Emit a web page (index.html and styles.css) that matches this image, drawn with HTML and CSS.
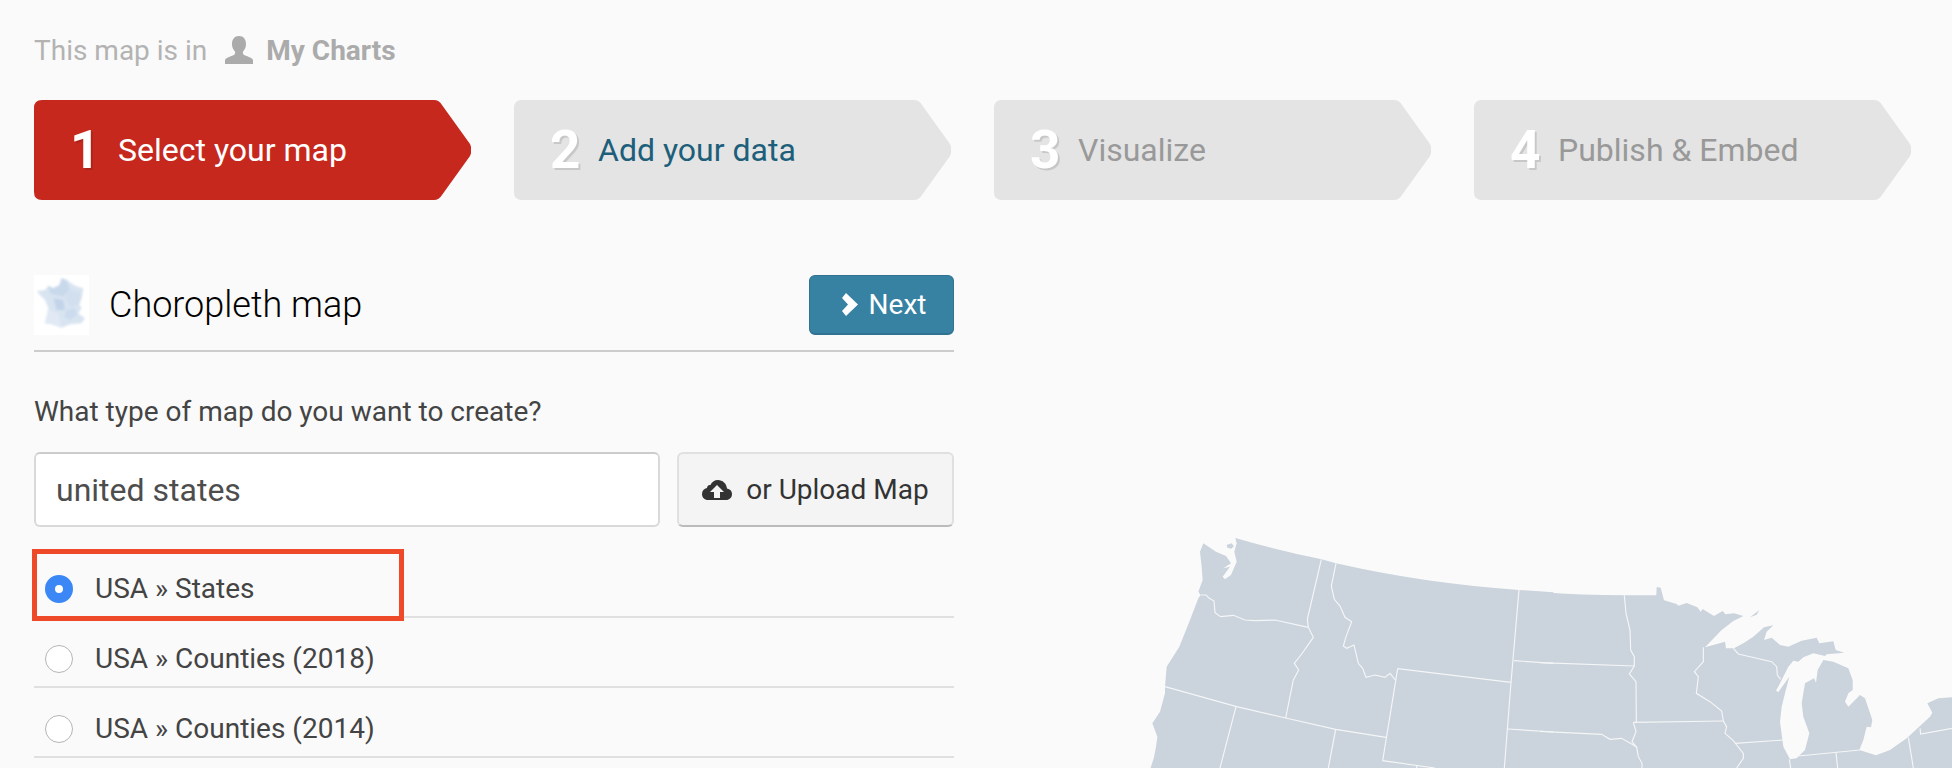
FILE: index.html
```html
<!DOCTYPE html>
<html lang="en">
<head>
  <meta charset="UTF-8" />
  <title>Select your map</title>
  <link rel="stylesheet" href="styles.css">
</head>
<body>
  <p class="breadcrumb">
    This map is in
    <svg class="user-icon" viewBox="0 0 28 28"><path d="M14 0c-4.600 0-7 3.500-7 8 0 3 1 5.500 2.800 7.200.5.500.5 2.600-.3 3.300C7 20.500 1 21 0 24v4h28v-4c-1-3-7-3.500-9.500-5.500-.8-.7-.8-2.800-.3-3.300C20 13.500 21 11 21 8c0-4.500-2.400-8-7-8z"/></svg>
    <strong>My Charts</strong>
  </p>

  <nav class="steps">
    <a class="step active"><b>1</b>Select your map</a>
    <a class="step next"><b>2</b>Add your data</a>
    <a class="step"><b>3</b>Visualize</a>
    <a class="step"><b>4</b>Publish &amp; Embed</a>
  </nav>

  <main class="columns">
    <section class="left">
      <div class="title-row">
        <div class="thumb">
          <svg viewBox="42 30 165 180">
            <path d="M50 78L75 75 85 62 100 70 118 60 125 40 140 45 165 62 190 70 185 100 178 118 185 130 175 145 195 160 185 175 150 178 125 188 95 178 75 175 85 130 75 105 60 90z" fill="#d9e4f1"/>
            <path d="M85 62L100 70 118 60 125 40 140 45 150 75 130 95 105 90 90 85z" fill="#c9d9ec"/>
            <path d="M150 75L185 85 178 118 150 125 135 100z" fill="#d2dfef"/>
            <path d="M100 100L130 105 135 135 110 135z" fill="#c3d4ea"/>
            <path d="M85 135L115 145 125 188 95 178 75 175z" fill="#e0e9f4"/>
            <path d="M140 135L165 130 172 150 150 165 132 155z" fill="#ccdbed"/>
          </svg>
        </div>
        <h2>Choropleth map</h2>
        <a class="btn-next">
          <svg viewBox="0 0 16 23"><path d="M4 0l12 11.500L4 23l-4-5 6-6.500L0 5z"/></svg>
          Next
        </a>
      </div>

      <p class="question">What type of map do you want to create?</p>

      <div class="search-row">
        <input class="search" type="text" value="united states">
        <a class="btn-upload">
          <svg viewBox="0 0 30 20"><path d="M25 8.500C24.500 3.500 20.500 0 16 0c-3.500 0-6.500 2-7.500 5C6.500 4.500 5 6 5 8 2 8.500 0 11 0 14c0 3.500 2.500 6 6 6h18c3.500 0 6-2.500 6-6 0-3-2-5-5-5.500zM18 12v6h-6v-6H8l7-7 7 7z"/></svg>
          or Upload Map
        </a>
      </div>

      <ul class="map-list">
        <li class="selected"><span class="radio"></span>USA » States</li>
        <li><span class="radio"></span>USA » Counties (2018)</li>
        <li><span class="radio"></span>USA » Counties (2014)</li>
      </ul>
    </section>

    <div class="map-preview">
      <svg class="usa" viewBox="0 0 2466 744">
        <g class="land">
          <path d="M316 54Q440 90 575 118L618 130Q880 190 1167 210L1270 217V750H60L72 712 78 680 82 650 67 610 90 575 105 520 105 500 110 440 148 380 180 300 205 235 212 225 205 215 218 180 215 140 210 95 220 70 258 95 288 108 303 130 280 145 300 140 278 170 285 178 303 165 320 125 313 95 320 70z"/>
          <path d="M290 75l14-5 8 8-8 8-12-3z"/>
        </g>
        <g class="land" transform="translate(1230)">
          <path d="M0 216Q125 226 253 226H349L350 201 362 203 372 241 410 252 415 257 440 249 472 262 482 275 488 267 522 288 548 273 556 283 582 280 610 288 580 303 545 330 495 382 555 365 558 385 582 385 610 370 640 350 672 322 700 316 680 335 672 360 695 353 720 375 745 380 785 362 830 353 838 370 880 364 887 390 913 398 860 403 855 408 820 400 790 412 775 425 760 422 745 440 725 480 708 512 715 516 748 470 735 520 725 560 720 605 730 680 750 718 770 715 795 690 808 640 790 590 785 550 795 490 822 475 828 488 833 450 850 420 880 425 925 445 938 480 938 510 925 520 915 545 925 560 960 525 975 535 997 600 993 622 980 620 970 660 958 690 1008 706 1050 690 1100 655 1170 590 1177 578 1162 550 1195 535 1236 532V750H0z"/>
          <path d="M630 292l28-22-8 14z"/>
        </g>
        <g class="borders">
          <path d="M574 118L532 298 535 322"/>
          <path d="M212 225H228L238 235 252 243 255 278 272 290 310 286 345 300 375 302 435 300 535 322"/>
          <path d="M535 322L550 352 515 402 493 430 506 450 490 480 467 594"/>
          <path d="M618 130L604 198 613 238 630 258 645 292 665 305 648 350 640 378 650 385 672 375 685 430 698 445 708 472 735 465 765 472 780 460 796 480"/>
          <path d="M803 446L1143 487"/>
          <path d="M803 446L758 722 915 744"/>
          <path d="M105 500L320 560 467 594 617 628 768 652"/>
          <path d="M318 560L270 744"/>
          <path d="M617 628L595 744"/>
          <path d="M860 737V744"/>
          <path d="M1167 210L1143 487 1123 744"/>
          <path d="M1152 422L1270 430"/>
          <path d="M1133 627L1270 636"/>
        </g>
        <g class="borders" transform="translate(1230)">
          <path d="M0 428L283 438"/>
          <path d="M0 634L185 643 210 658 245 655 280 675 290 682"/>
          <path d="M253 226L258 280 270 330 272 390 283 410 283 438 268 462 288 485 289 607"/>
          <path d="M280 607L550 603"/>
          <path d="M280 607L288 635 276 665 290 682 295 710 306 730V744"/>
          <path d="M490 382V425L463 455 475 470 469 520 510 545 545 573 550 603 560 620 555 640 580 662 610 700 610 715 590 744"/>
          <path d="M585 670L730 660"/>
          <path d="M580 385L595 402 695 425 710 440 712 465 722 478"/>
          <path d="M748 718L752 744"/>
          <path d="M775 708L960 690"/>
          <path d="M888 698L893 744"/>
          <path d="M1105 652L1120 744"/>
          <path d="M1140 625L1142 642 1236 625"/>
        </g>
      </svg>
    </div>
  </main>
</body>
</html>
```

FILE: styles.css
```css
html, body {
  height: 768px;
  overflow: hidden;
}
body {
  margin: 0;
  padding: 0 34px;
  background: #fafafa;
  color: #444;
  font-family: Roboto, sans-serif;
}
a {
  display: flex;
  align-items: center;
}
.breadcrumb {
  display: flex;
  align-items: center;
  height: 50px;
  margin: 0;
  padding-top: 25px;
  font-size: 28px;
  color: #b3b3b3;
}
.user-icon {
  width: 30px;
  height: 28px;
  margin: 0 12px 0 17px;
  fill: #ababab;
}
.breadcrumb strong {
  color: #ababab;
  font-weight: 700;
}
.steps {
  display: flex;
  gap: 43px;
  height: 100px;
  margin: 25px 0 75px;
}
.step {
  width: 437px;
  height: 100px;
  font-size: 32px;
  color: #999;
  background: #e4e4e4;
  clip-path: path('M8 0H400Q405 0 408 5L436 44Q439 50 436 56L408 95Q405 100 400 100H8Q0 100 0 92V8Q0 0 8 0Z');
}
.step b {
  width: 84px;
  padding-left: 36px;
  box-sizing: border-box;
  font-size: 53px;
  color: #fff;
  text-shadow: 2px 2px 0 rgba(0, 0, 0, 0.12);
}
.step.active {
  color: #fff;
  background: #c6281e;
}
.step.next {
  color: #1d5f7a;
}
.columns {
  display: flex;
}
.left {
  width: 920px;
}
.title-row {
  display: flex;
  align-items: center;
  height: 60px;
  padding-bottom: 15px;
  border-bottom: 2px solid #ccc;
}
.thumb {
  width: 55px;
  height: 60px;
  background: #fff;
}
.thumb svg {
  display: block;
  width: 55px;
  height: 60px;
  filter: blur(0.8px);
}
.title-row h2 {
  flex: 1;
  margin: 0 0 0 20px;
  font-size: 36px;
  font-weight: 300;
  color: #000;
}
.btn-next {
  justify-content: center;
  gap: 11px;
  width: 145px;
  height: 60px;
  box-sizing: border-box;
  padding-left: 5px;
  font-size: 28px;
  color: #fff;
  background: #3781a3;
  border: 1px solid #2f7291;
  border-bottom-width: 2px;
  border-radius: 6px;
}
.btn-next svg {
  width: 16px;
  height: 23px;
  fill: #fff;
}
.question {
  margin: 45px 0 25px;
  height: 30px;
  line-height: 30px;
  font-size: 28px;
  color: #444;
}
.search-row {
  display: flex;
  gap: 17px;
  height: 75px;
}
.search {
  width: 626px;
  height: 75px;
  box-sizing: border-box;
  padding: 0 20px;
  font: 32px Roboto, sans-serif;
  color: #4d4d4d;
  background: #fff;
  border: 2px solid #d9d9d9;
  border-top-color: #ccc;
  border-radius: 6px;
  outline: none;
}
.btn-upload {
  justify-content: center;
  gap: 14px;
  width: 277px;
  height: 75px;
  box-sizing: border-box;
  font-size: 28px;
  color: #333;
  background: #f4f4f4;
  border: 2px solid #e0e0e0;
  border-bottom-color: #bbb;
  border-radius: 6px;
}
.btn-upload svg {
  width: 30px;
  height: 20px;
  fill: #333;
}
.map-list {
  margin: 21px 0 0;
  padding: 0;
  list-style: none;
}
.map-list li {
  display: flex;
  align-items: center;
  height: 56px;
  padding: 12px 0 0 11px;
  font-size: 28px;
  color: #444;
  border-bottom: 2px solid #e0e0e0;
}
.map-list li.selected {
  position: relative;
}
.map-list li.selected::after {
  content: "";
  position: absolute;
  left: -2px;
  top: 1px;
  width: 372px;
  height: 72px;
  box-sizing: border-box;
  border: 5px solid #ee4a2a;
}
.radio {
  width: 28px;
  height: 28px;
  box-sizing: border-box;
  margin: 2px 22px 0 0;
  background: #fff;
  border: 1px solid #b5b5b5;
  border-radius: 50%;
}
.selected .radio {
  background: #fff;
  border: 10px solid #3b87f5;
}
.map-preview {
  margin: 245px 0 0 176px;
}
.usa {
  display: block;
  width: 822px;
  height: 248px;
}
.land {
  fill: #cbd3dc;
}
.borders {
  fill: none;
  stroke: #f5f6f7;
  stroke-width: 3.500;
}
```
